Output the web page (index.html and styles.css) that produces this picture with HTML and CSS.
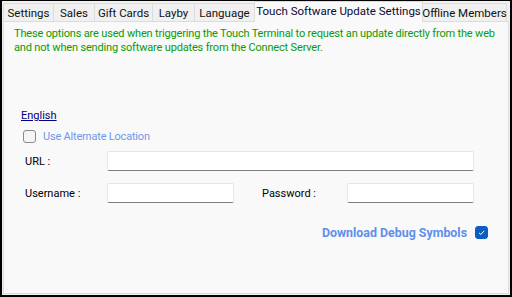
FILE: index.html
```html
<!DOCTYPE html>
<html>
<head>
<meta charset="utf-8">
<link rel="stylesheet" href="styles.css">
</head>
<body>
<div class="window">
  <div class="tabstrip">
    <div class="tab w-settings">Settings</div>
    <div class="tab w-sales">Sales</div>
    <div class="tab w-gift">Gift Cards</div>
    <div class="tab w-layby">Layby</div>
    <div class="tab w-language">Language</div>
    <div class="tab tab-active w-touch">Touch Software Update Settings</div>
    <div class="tab w-offline">Offline Members</div>
  </div>
  <div class="panel">
    <p class="note">These options are used when triggering the Touch Terminal to request an update directly from the web<br>and not when sending software updates from the Connect Server.</p>
    <a class="lang-link">English</a>
    <div class="check-row">
      <span class="checkbox"></span>
      <span class="check-label">Use Alternate Location</span>
    </div>
    <div class="form-row row-url">
      <span class="label">URL :</span>
      <span class="input input-url"></span>
    </div>
    <div class="form-row row-user">
      <span class="label">Username :</span>
      <span class="input input-short"></span>
      <span class="label label-pass">Password :</span>
      <span class="input input-short"></span>
    </div>
    <div class="debug-row">
      <span class="debug-label">Download Debug Symbols</span>
      <span class="checkbox checked">
        <svg width="9" height="9" viewBox="0 0 9 9"><path d="M2 4.8 L3.8 6.5 L7.2 2.8" fill="none" stroke="#ffffff" stroke-width="1"/></svg>
      </span>
    </div>
  </div>
</div>
</body>
</html>
```

FILE: styles.css
```css
html, body {
  margin: 0;
  padding: 0;
}
body {
  width: 512px;
  height: 297px;
  font-family: Roboto, "Liberation Sans", Arial, sans-serif;
  font-size: 11px;
  color: #000;
}
.window {
  box-sizing: border-box;
  width: 512px;
  height: 297px;
  background: #f0f0f0;
  border-top: 1px solid #000;
  border-left: 2px solid #000;
  border-right: 2px solid #000;
  border-bottom: 2px solid #000;
  display: flex;
  flex-direction: column;
  padding: 0 1px 1px 1px;
}
.tabstrip {
  display: flex;
  align-items: flex-end;
  height: 20px;
  flex: none;
  position: relative;
  z-index: 1;
}
.tab {
  box-sizing: border-box;
  height: 18px;
  border: 1px solid #dcdcdc;
  border-bottom: none;
  border-left: none;
  background: #f0f0f0;
  display: flex;
  align-items: center;
  justify-content: center;
  white-space: nowrap;
  font-size: 11.5px;
  color: #111;
}
.w-settings { width: 51px; border-left: 1px solid #dcdcdc; }
.w-sales { width: 41px; }
.w-gift { width: 58px; }
.w-layby { width: 42px; }
.w-language { width: 60px; }
.w-touch { width: 169px; }
.w-offline { width: 84px; }
.tab-active {
  height: 21px;
  background: #f9f9f9;
  margin-bottom: -1px;
  border-left: 1px solid #dcdcdc;
  padding-bottom: 3px;
  margin-left: -1px;
  color: #0a0a30;
}
.panel {
  flex: 1;
  background: #f9f9f9;
  border: 1px solid #dcdcdc;
  padding: 5px 10px 0 10px;
}
.note {
  margin: 0;
  color: #089a08;
  line-height: 14px;
  white-space: nowrap;
  font-size: 11px;
  letter-spacing: -0.17px;
}
.lang-link {
  display: block;
  margin-top: 54px;
  margin-left: 7px;
  width: max-content;
  color: #000080;
  text-decoration: underline;
  line-height: 14px;
}
.check-row {
  display: flex;
  align-items: center;
  gap: 7px;
  margin-top: 6px;
  margin-left: 9px;
  height: 14px;
}
.checkbox {
  box-sizing: border-box;
  width: 13px;
  height: 13px;
  border: 1px solid #8a8a8a;
  border-radius: 3px;
  background: #f5f5f5;
  display: inline-flex;
  align-items: center;
  justify-content: center;
}
.check-label {
  color: #6f98e8;
  letter-spacing: -0.2px;
}
.form-row {
  display: flex;
  align-items: center;
  height: 20px;
}
.row-url {
  margin-top: 8px;
}
.row-user {
  margin-top: 12px;
}
.label {
  width: 93px;
  padding-left: 11px;
  box-sizing: border-box;
  flex: none;
}
.label-pass {
  width: 113px;
  padding-left: 28px;
}
.input {
  box-sizing: border-box;
  height: 20px;
  background: #fff;
  border: 1px solid #e6e6e6;
  border-bottom: 1px solid #808080;
  border-radius: 2px;
}
.input-url {
  width: 367px;
}
.input-short {
  width: 127px;
}
.debug-row {
  display: flex;
  justify-content: flex-end;
  align-items: center;
  gap: 8px;
  margin-top: 22px;
  margin-right: 10px;
  height: 14px;
}
.debug-label {
  color: #5f8fec;
  font-weight: bold;
  font-size: 12.4px;
}
.checkbox.checked {
  background: #0a5fc4;
  border-color: #0a5fc4;
}
```
